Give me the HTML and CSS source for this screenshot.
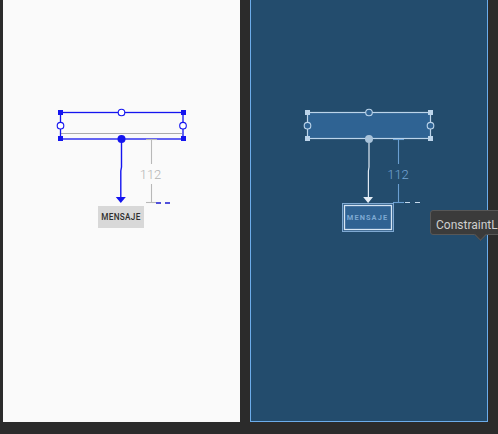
FILE: index.html
```html
<!DOCTYPE html>
<html>
<head>
<meta charset="utf-8">
<link rel="stylesheet" href="styles.css">
</head>
<body>
<div class="stage">
  <div class="panel design">
    <svg class="canvas" width="237" height="422" viewBox="3 0 237 422">
      <line class="d-base" x1="61" y1="133.5" x2="182" y2="133.5"/>
      <rect class="d-box" x="60.5" y="112.5" width="122.5" height="26.5"/>
      <rect class="d-handle" x="58" y="110" width="5" height="5"/>
      <rect class="d-handle" x="181" y="110" width="5" height="5"/>
      <rect class="d-handle" x="58" y="136" width="5" height="5"/>
      <rect class="d-handle" x="181" y="136" width="5" height="5"/>
      <circle class="d-anchor" cx="121.5" cy="112.5" r="3.3"/>
      <circle class="d-anchor" cx="60.5" cy="125.7" r="3.3"/>
      <circle class="d-anchor" cx="183" cy="125.7" r="3.3"/>
      <circle class="d-anchor-on" cx="121.5" cy="139" r="4"/>
      <path class="d-arrow" d="M121.5 139 V167 L120.8 171 V198"/>
      <polygon class="d-head" points="115.8,197 125.8,197 120.8,203"/>
      <line class="d-dim" x1="151.5" y1="139" x2="151.5" y2="164"/>
      <line class="d-dim" x1="151.5" y1="184" x2="151.5" y2="202"/>
      <line class="d-dim" x1="146" y1="139.5" x2="157" y2="139.5"/>
      <text class="dim-text d-dim-text" x="150.5" y="179">112</text>
      <line class="d-dim" x1="146" y1="202.5" x2="156" y2="202.5"/>
      <line class="d-dash" x1="156" y1="203" x2="172" y2="203"/>
      <rect class="d-btn" x="98" y="206" width="46" height="22"/>
      <text class="btn-text d-btn-text" x="121" y="220">MENSAJE</text>
    </svg>
  </div>
  <div class="panel blueprint">
    <svg class="canvas" width="236" height="421" viewBox="251 0 236 421">
      <rect class="b-box" x="307.5" y="112.5" width="123" height="26"/>
      <rect class="b-handle" x="305" y="110" width="5" height="5"/>
      <rect class="b-handle" x="428" y="110" width="5" height="5"/>
      <rect class="b-handle" x="305" y="136" width="5" height="5"/>
      <rect class="b-handle" x="428" y="136" width="5" height="5"/>
      <circle class="b-anchor" cx="369" cy="112.5" r="3.3"/>
      <circle class="b-anchor" cx="307.5" cy="125.7" r="3.3"/>
      <circle class="b-anchor" cx="430.5" cy="125.7" r="3.3"/>
      <circle class="b-anchor-on" cx="369" cy="139" r="4"/>
      <path class="b-arrow" d="M369 143 V167 L368.4 171 V198"/>
      <polygon class="b-head" points="363.2,197 373,197 368.1,203"/>
      <line class="b-dim" x1="398.5" y1="139" x2="398.5" y2="164"/>
      <line class="b-dim" x1="398.5" y1="184" x2="398.5" y2="202"/>
      <line class="b-dim" x1="393" y1="139.5" x2="404" y2="139.5"/>
      <text class="dim-text b-dim-text" x="398" y="179">112</text>
      <line class="b-dim" x1="393" y1="202.5" x2="404" y2="202.5"/>
      <line class="b-dash" x1="405" y1="202.5" x2="420" y2="202.5"/>
      <rect class="b-btn-out" x="342.5" y="203.5" width="51" height="28"/>
      <rect class="b-btn-in" x="344.5" y="205.5" width="47" height="24"/>
      <text class="btn-text b-btn-text" x="367.5" y="220">MENSAJE</text>
    </svg>
  </div>
  <div class="tooltip">
    <span class="tooltip-text">ConstraintL</span>
    <span class="tooltip-tip"></span>
  </div>
</div>
</body>
</html>
```

FILE: styles.css
```css
html, body {
  margin: 0;
  padding: 0;
  background: #2b2b2b;
  overflow: hidden;
}

.stage {
  position: relative;
  width: 498px;
  height: 434px;
  display: flex;
  align-items: flex-start;
  gap: 10px;
  padding-left: 3px;
  box-sizing: border-box;
  background: #2b2b2b;
  overflow: hidden;
}

.panel {
  height: 422px;
  box-sizing: border-box;
  flex: none;
}

.design {
  width: 237px;
  background: #fafafa;
}

.blueprint {
  width: 238px;
  background: #234c6d;
  border: 1px solid #6cacea;
  border-top: none;
}

.canvas {
  display: block;
}

/* design canvas */
.d-base { stroke: #ababab; stroke-width: 1.2; }
.d-box { fill: none; stroke: #1414f0; stroke-width: 1.3; }
.d-handle { fill: #1414f0; }
.d-anchor { fill: #ffffff; stroke: #1414f0; stroke-width: 1.1; }
.d-anchor-on { fill: #1414f0; }
.d-arrow { fill: none; stroke: #1414f0; stroke-width: 1.4; }
.d-head { fill: #1414f0; }
.d-dim { stroke: #b8b8b8; stroke-width: 1.1; }
.d-dash { stroke: #1a1ad0; stroke-width: 1.3; stroke-dasharray: 5 4; }
.d-btn { fill: #d8d8d8; }

.dim-text {
  font-family: Roboto, "Liberation Sans", sans-serif;
  font-size: 13px;
  font-weight: 300;
  text-anchor: middle;
}
.d-dim-text { fill: #b4b4b4; }

.btn-text {
  font-family: Roboto, "Liberation Sans", sans-serif;
  font-size: 8.2px;
  font-weight: 500;
  text-anchor: middle;
}
.d-btn-text { fill: #2e2e2e; letter-spacing: 0.3px; }

/* blueprint canvas */
.b-box { fill: #2f6393; stroke: #bcd4ea; stroke-width: 1.2; }
.b-handle { fill: #bcd4ea; }
.b-anchor { fill: #2f6393; stroke: #bcd4ea; stroke-width: 1.1; }
.b-anchor-on { fill: #a9c3da; }
.b-arrow { fill: none; stroke: #dfe9f3; stroke-width: 1.2; }
.b-head { fill: #e6eef6; }
.b-dim { stroke: #6a9fd2; stroke-width: 1.1; }
.b-dim-text { fill: #74a4d4; }
.b-dash { stroke: #c8dbee; stroke-width: 1.1; stroke-dasharray: 5 5; }
.b-btn-out { fill: #2c5b86; stroke: #7fa9d2; stroke-width: 1; }
.b-btn-in { fill: #2f6292; stroke: #d6e5f3; stroke-width: 1.3; }
.b-btn-text { fill: #7ea9d3; letter-spacing: 1.1px; font-weight: 700; font-size: 7.4px; }

/* tooltip */
.tooltip {
  position: absolute;
  left: 430px;
  top: 210px;
  width: 90px;
  height: 25px;
  box-sizing: border-box;
  background: #3b3b3b;
  border: 1px solid #575757;
  border-radius: 3px;
  padding: 4px 0 0 5px;
}

.tooltip-text {
  font-family: Roboto, "Liberation Sans", sans-serif;
  font-size: 12px;
  color: #cfcfcf;
  line-height: 15px;
  white-space: nowrap;
}

.tooltip-tip {
  position: absolute;
  left: 45px;
  top: 19px;
  width: 8px;
  height: 8px;
  background: #3b3b3b;
  border-right: 1px solid #575757;
  border-bottom: 1px solid #575757;
  transform: rotate(45deg);
}
```
